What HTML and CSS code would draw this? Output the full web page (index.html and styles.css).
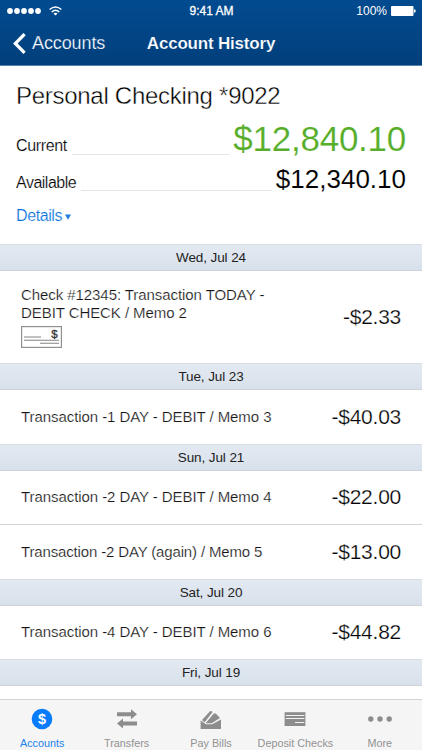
FILE: index.html
```html
<!DOCTYPE html>
<html lang="en">
<head>
<meta charset="utf-8">
<title>Account History</title>
<link rel="stylesheet" href="styles.css">
</head>
<body>
<div class="screen">
  <header class="header">
    <div class="status">
      <div class="signal">
        <svg width="34" height="6" viewBox="0 0 34 6" fill="#fff"><circle cx="3" cy="3" r="2.9"/><circle cx="10" cy="3" r="2.9"/><circle cx="17" cy="3" r="2.9"/><circle cx="24" cy="3" r="2.9"/><circle cx="31" cy="3" r="2.9"/></svg>
        <svg class="wifi" width="13" height="10" viewBox="0 0 13 10" fill="none" stroke="#fff" stroke-width="1.4"><path d="M.6 3.6Q6.5-1.7 12.4 3.6M2.7 6Q6.5 2.5 10.3 6"/><path d="M4.5 7.5Q6.5 5.8 8.5 7.5L6.5 9.6Z" fill="#fff" stroke="none"/></svg>
      </div>
      <span class="clock">9:41 AM</span>
      <div class="power"><span class="percent">100%</span>
        <svg width="25" height="10" viewBox="0 0 25 10" fill="#fff"><rect width="22.5" height="10" rx="1"/><path d="M23 3.2q1.8.2 1.8 1.8T23 6.8z"/></svg>
      </div>
    </div>
    <nav class="navbar">
      <div class="back"><svg width="13" height="21" viewBox="0 0 13 21" fill="none" stroke="#fff" stroke-width="3.2"><path d="M11.6 1.1 2.3 10.5l9.3 9.4"/></svg><span class="back-label">Accounts</span></div>
      <h1 class="heading"><span class="heading-text">Account History</span></h1>
      <span></span>
    </nav>
  </header>
  <main class="content">
    <section class="summary">
      <h2 class="account"><span class="account-text">Personal Checking *9022</span></h2>
      <div class="balance current"><span class="label-current">Current</span><i class="rule"></i><span class="amount-current">$12,840.10</span></div>
      <div class="balance available"><span class="label-available">Available</span><i class="rule"></i><span class="amount-available">$12,340.10</span></div>
      <div class="details"><span class="details-label">Details</span><svg class="caret" width="6" height="6" viewBox="0 0 6 6"><path d="M0 .5h6L3 5.7z" fill="#1d7fe0"/></svg></div>
    </section>
    <div class="date"><span>Wed, Jul 24</span></div>
    <div class="entry tall">
      <div class="memo"><span class="line line-a">Check #12345: Transaction TODAY -</span><span class="line line-b">DEBIT CHECK / Memo 2</span>
        <svg class="check" width="41" height="22" viewBox="0 0 41 22"><rect x=".6" y=".6" width="39.8" height="20.8" fill="#fff" stroke="#919191" stroke-width="1.2"/><path d="M3 11h17M3 14.2h35M19 17.3h19" stroke="#858585" stroke-width="1.1"/><text class="check-sign" x="33.5" y="11.8" text-anchor="middle">$</text></svg>
      </div>
      <span class="amount">-$2.33</span>
    </div>
    <div class="date"><span>Tue, Jul 23</span></div>
    <div class="entry"><span class="line line-c">Transaction -1 DAY - DEBIT / Memo 3</span><span class="amount">-$40.03</span></div>
    <div class="date"><span>Sun, Jul 21</span></div>
    <div class="entry divided"><span class="line line-c">Transaction -2 DAY - DEBIT / Memo 4</span><span class="amount">-$22.00</span></div>
    <div class="entry"><span class="line line-d">Transaction -2 DAY (again) / Memo 5</span><span class="amount">-$13.00</span></div>
    <div class="date"><span>Sat, Jul 20</span></div>
    <div class="entry"><span class="line line-c">Transaction -4 DAY - DEBIT / Memo 6</span><span class="amount">-$44.82</span></div>
    <div class="date"><span>Fri, Jul 19</span></div>
  </main>
  <footer class="tabs">
    <div class="tab active"><svg class="icon" width="22" height="22" viewBox="0 0 22 22"><circle cx="11" cy="11" r="10.3" fill="#087bfa"/><text class="coin" x="11" y="16" text-anchor="middle">$</text></svg><span>Accounts</span></div>
    <div class="tab"><svg class="icon" width="22" height="22" viewBox="0 0 22 22" fill="#8d8d8d"><path d="M1 4.2h14V1.2l6 5-6 5V8.2H1zM21 13.6H7v-3l-6 5 6 5v-3h14z"/></svg><span>Transfers</span></div>
    <div class="tab"><svg class="icon" width="22" height="22" viewBox="0 0 22 22" fill="#8d8d8d"><path d="M.6 12.4 6 16.2h6.2l8.8-4.8V21H.6z"/><path d="M2 12 10 3.2q1.2-.8 2.6.9L5 13.8l-.8.5z"/><path d="M6 14.8 13.4 6q1.2-1.3 2.6-.2l4 4.2-8.3 5.2H6z"/></svg><span>Pay Bills</span></div>
    <div class="tab"><svg class="icon" width="22" height="22" viewBox="0 0 22 22"><path d="M.6 4.2h20.8V18H.6z" fill="#8d8d8d"/><path d="M1.8 7.5h18.5M1.8 10.5h18.5M11 14.5h9.3" stroke="#f3f3f3"/></svg><span>Deposit Checks</span></div>
    <div class="tab"><svg class="icon" width="24" height="22" viewBox="0 0 24 22" fill="#8d8d8d"><circle cx="2.8" cy="11" r="2.7"/><circle cx="12" cy="11" r="2.7"/><circle cx="21.2" cy="11" r="2.7"/></svg><span>More</span></div>
  </footer>
</div>
</body>
</html>
```
FILE: styles.css
```css
* { box-sizing: border-box; }
body { margin: 0; font-family: "Liberation Sans", Arial, sans-serif; color: #111; background: #fff; }
span { white-space: nowrap; }
svg { flex: none; display: block; }
.screen { width: 422px; height: 750px; overflow: hidden; display: flex; flex-direction: column; }
.header { height: 66px; flex: none; background: linear-gradient(#024b90, #023f7b); border-bottom: 1px solid #5783ad; color: #fff; }
.status { height: 22px; display: grid; grid-template-columns: 1fr auto 1fr; align-items: center; padding: 0 6px 0 7px; }
.signal { display: flex; align-items: center; gap: 8px; }
.clock { font-size: 12px; -webkit-text-stroke: .3px #fff; }
.power { display: flex; align-items: center; justify-content: flex-end; gap: 4px; font-size: 12px; }
.navbar { height: 43px; display: grid; grid-template-columns: 1fr auto 1fr; align-items: center; padding: 0 13px; }
.back { display: flex; align-items: center; gap: 6px; font-size: 18px; letter-spacing: -.1px; -webkit-text-stroke: .25px #02458a; }
.heading { margin: 0; font-size: 17px; font-weight: bold; letter-spacing: -.2px; -webkit-text-stroke: .2px #02458a; }
.content { flex: 1; min-height: 0; overflow: hidden; }
.summary { height: 178px; padding: 15px 16px 0; }
.account { margin: 0; font-size: 24px; font-weight: normal; line-height: 30px; letter-spacing: -.28px; color: #000; -webkit-text-stroke: .4px #fff; }
.balance { display: flex; align-items: baseline; }
.current { height: 43px; line-height: 55px; }
.available { height: 38px; line-height: 50px; }
.label-current, .label-available { font-size: 16px; letter-spacing: -.37px; color: #000; -webkit-text-stroke: .2px #fff; }
.label-available { letter-spacing: -.5px; }
.rule { flex: 1; border-bottom: 1px solid #e4e4e4; margin: 0 4px 0 5px; transform: translateY(4px); }
.available .rule { transform: translateY(3px); }
.amount-current { font-size: 35px; letter-spacing: -.25px; color: #56ae2b; -webkit-text-stroke: .15px #fff; }
.amount-available { font-size: 26px; color: #000; -webkit-text-stroke: .1px #fff; }
.details { display: flex; align-items: center; gap: 3px; height: 48px; font-size: 16px; letter-spacing: -.4px; color: #0873dc; -webkit-text-stroke: .2px #fff; }
.caret { margin-top: 2px; }
.date { height: 27px; display: flex; justify-content: center; align-items: center; background: linear-gradient(#e3e9f1, #d8e1eb); border-top: 1px solid #d9dde2; border-bottom: 1px solid #cfd3d8; font-size: 13.5px; letter-spacing: -.1px; color: #222; }
.entry { height: 53.5px; display: flex; align-items: center; justify-content: space-between; padding: 0 21px; color: #151515; }
.entry.divided { height: 54.5px; border-bottom: 1px solid #d5d5d5; }
.entry.tall { height: 92px; }
.memo { display: flex; flex-direction: column; align-items: flex-start; }
.line { font-size: 15px; line-height: 18px; letter-spacing: -.07px; -webkit-text-stroke: .2px #fff; }
.line-d { letter-spacing: -.15px; }
.check { margin-top: 4px; }
.check-sign { font-size: 11.5px; fill: #333; stroke: #333; stroke-width: .3px; }
.amount { font-size: 21px; letter-spacing: -.25px; color: #000; -webkit-text-stroke: .25px #fff; }
.tabs { flex: none; height: 51px; display: grid; grid-template-columns: repeat(5, 1fr); background: #f5f5f5; border-top: 1px solid #d4d4d4; color: #929292; font-size: 10.8px; }
.tab { display: flex; flex-direction: column; align-items: center; padding-top: 8px; gap: 7px; line-height: 12px; }
.active { color: #1d82ea; }
.coin { font-size: 14.5px; font-weight: bold; fill: #fff; }
```
